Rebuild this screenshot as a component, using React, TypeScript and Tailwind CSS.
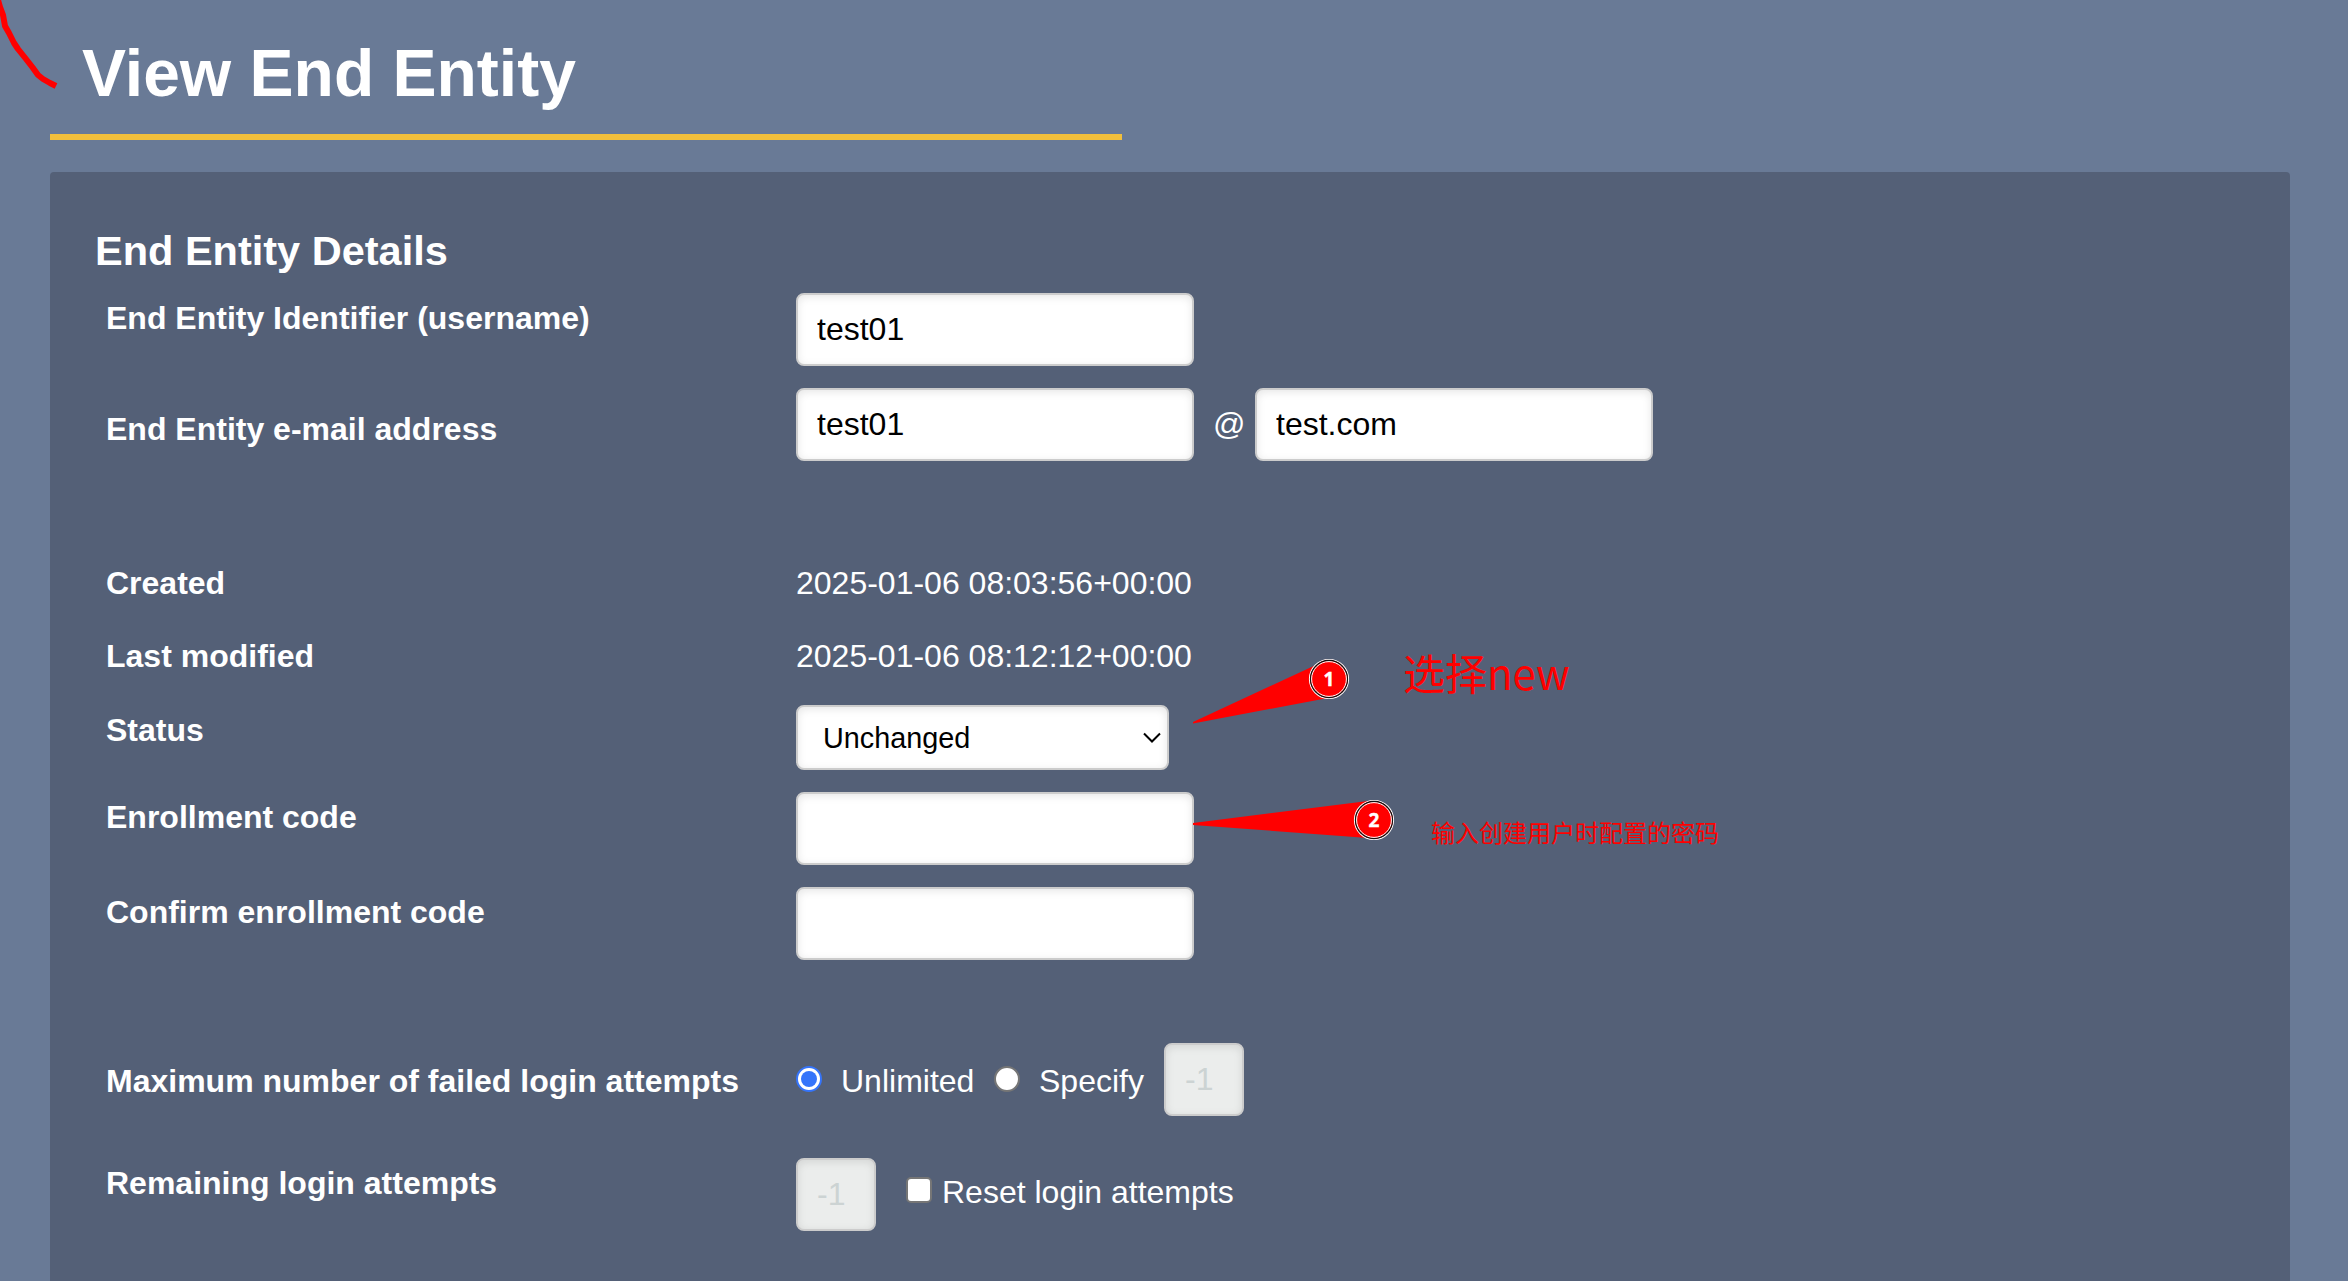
import React from "react";

const fieldBase =
  "block h-[73px] rounded-[8px] border-2 border-[#ccc] px-[19px] pb-[1px] text-[32px] leading-[36px] shadow-[inset_0_2px_8px_rgba(0,0,0,0.1)] outline-none";

function TextField({ label, value = "", type = "text" }: { label: string; value?: string; type?: string }) {
  return (
    <input
      aria-label={label}
      type={type}
      defaultValue={value}
      className={`${fieldBase} w-[398px] bg-white text-black`}
    />
  );
}

function CountField({ label }: { label: string }) {
  return (
    <input
      aria-label={label}
      disabled
      value="-1"
      readOnly
      className={`${fieldBase} w-[80px] bg-[#ebedec] text-[#ccd3d3]`}
    />
  );
}

function Row({
  label,
  height,
  labelOffset = "pt-[7px]",
  children,
}: {
  label: string;
  height: string;
  labelOffset?: string;
  children: React.ReactNode;
}) {
  return (
    <div className={`flex shrink-0 items-start ${height}`}>
      <div className={`w-[690px] shrink-0 font-bold whitespace-nowrap ${labelOffset}`}>{label}</div>
      {children}
    </div>
  );
}

function Marker({ n, x, y }: { n: string; x: number; y: number }) {
  return (
    <g>
      <circle cx={x} cy={y} r={19.5} fill="#f00" stroke="#fff" strokeWidth={1.2} />
      <circle cx={x} cy={y} r={18.5} fill="none" stroke="#111" strokeWidth={1.3} />
      <circle cx={x} cy={y} r={17.4} fill="none" stroke="#fff" strokeWidth={1} />
      <text x={x} y={y + 7} textAnchor="middle" fill="#fff" stroke="#fff" strokeWidth={0.4} fontSize={19} fontWeight={700} fontFamily="Open Sans, sans-serif">
        {n}
      </text>
    </g>
  );
}

export default function App() {
  return (
    <div className="relative flex h-[1281px] w-[2348px] flex-col overflow-hidden bg-[#697a96] px-[50px] font-['Liberation_Sans',Arial,sans-serif] text-white">
      <h1 className="h-[140px] w-[1072px] shrink-0 border-b-[6px] border-[#f2bf3b] pt-[36px] pl-[32px] text-[66px] leading-[74px] font-bold whitespace-nowrap">
        View End Entity
      </h1>

      <section className="mt-[32px] w-[2240px] grow rounded-t-[4px] bg-[#546077] pl-[45px] text-[32px] leading-[36px]">
        <h2 className="h-[121px] pt-[56px] text-[41.5px] leading-[46px] font-bold">End Entity Details</h2>

        <div className="pl-[11px]">
          <Row label="End Entity Identifier (username)" height="h-[95px]">
            <TextField label="Username" value="test01" />
          </Row>

          <Row label="End Entity e-mail address" height="h-[177px]" labelOffset="pt-[23px]">
            <TextField label="E-mail user" value="test01" />
            <span className="w-[61px] pt-[18px] pl-[19px]">@</span>
            <TextField label="E-mail domain" value="test.com" />
          </Row>

          <Row label="Created" height="h-[73px]" labelOffset="pt-0">
            <span>2025-01-06 08:03:56+00:00</span>
          </Row>

          <Row label="Last modified" height="h-[67px]" labelOffset="pt-0">
            <span>2025-01-06 08:12:12+00:00</span>
          </Row>

          <Row label="Status" height="h-[87px]">
            <div className="flex h-[65px] w-[373px] items-center justify-between rounded-[8px] border-2 border-[#ccc] bg-white pr-[6px] pl-[25px] text-[28.8px] leading-[32px] text-black shadow-[inset_0_2px_8px_rgba(0,0,0,0.1)]">
              <span>Unchanged</span>
              <svg width="18" height="12" viewBox="0 0 18 12" fill="none" stroke="#000" strokeWidth="2">
                <path d="M1 1.5 9 9.5 17 1.5" />
              </svg>
            </div>
          </Row>

          <Row label="Enrollment code" height="h-[95px]">
            <TextField label="Enrollment code" type="password" />
          </Row>

          <Row label="Confirm enrollment code" height="h-[156px]">
            <TextField label="Confirm enrollment code" type="password" />
          </Row>

          <Row label="Maximum number of failed login attempts" height="h-[115px]" labelOffset="pt-[20px]">
            <label className="flex w-[198px] pt-[20px] whitespace-nowrap">
              <span className="mt-[3px] mr-[19px] flex size-[26px] shrink-0 items-center justify-center rounded-full border-2 border-[#3574fa] bg-white">
                <span className="size-[16px] rounded-full bg-[#3574fa]" />
              </span>
              Unlimited
            </label>
            <label className="flex w-[170px] pt-[20px] whitespace-nowrap">
              <span className="mt-[3px] mr-[19px] size-[26px] shrink-0 rounded-full border-2 border-[#767676] bg-white" />
              Specify
            </label>
            <CountField label="Maximum failed login attempts" />
          </Row>

          <Row label="Remaining login attempts" height="h-[115px]">
            <CountField label="Remaining login attempts" />
            <label className="flex pt-[16px] pl-[30px] whitespace-nowrap">
              <span className="mt-[3px] mr-[10px] size-[26px] shrink-0 rounded-[5px] border-2 border-[#767676] bg-white" />
              Reset login attempts
            </label>
          </Row>
        </div>
      </section>

      {/* Annotations drawn over the form */}
      <svg className="pointer-events-none absolute inset-0" width="2348" height="1281" viewBox="0 0 2348 1281">
        <path
          d="M-2 0 0 7 3 15 5 26 9 33 14 43 18 49 26 59 33 68 38 75 43 79 50 83 56 86"
          fill="none"
          stroke="#f00"
          strokeWidth="6"
          strokeLinejoin="round"
        />
        <path d="M1193 723.5V722L1318 664 1328 698Z" fill="#f00" />
        <path d="M1193 825V823L1368 801 1368 838Z" fill="#f00" />
        <Marker n="1" x={1329} y={679} />
        <Marker n="2" x={1374} y={820} />
      </svg>
      <div className="absolute top-[642px] left-[1403px] font-['Noto_Sans_CJK_SC',sans-serif] text-[42px] leading-[60px] font-normal whitespace-nowrap text-[#f00]">
        选择new
      </div>
      <div className="absolute top-[814px] left-[1431px] font-['Noto_Sans_CJK_SC',sans-serif] text-[24px] leading-[36px] font-normal whitespace-nowrap text-[#f00]">
        输入创建用户时配置的密码
      </div>
    </div>
  );
}
